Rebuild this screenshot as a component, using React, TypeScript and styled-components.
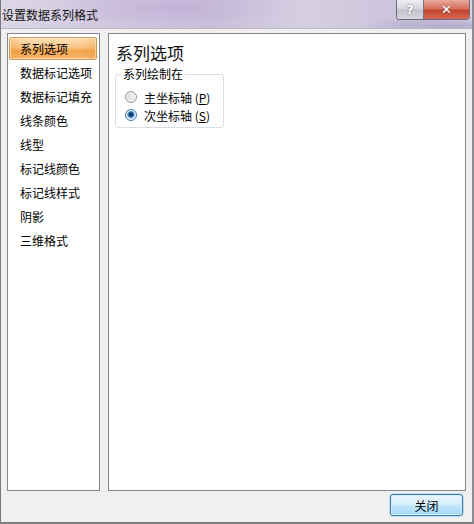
import React from 'react';
import styled, { createGlobalStyle } from 'styled-components';

const Global = createGlobalStyle`
  html, body { margin: 0; padding: 0; background: #f0f0f0; }
  body { font-family: "Noto Sans CJK SC", "Noto Sans", sans-serif; font-size: 12px; color: #000; }
`;

const Window = styled.div`
  width: 474px;
  height: 524px;
  display: flex;
  flex-direction: column;
  box-sizing: border-box;
  background: #f0f0f0;
  border-left: 1px solid #7a7a7a;
  border-right: 2px solid #8d8a96;
  border-bottom: 2px solid #7d7d7d;
  overflow: hidden;
`;

const TitleBar = styled.div`
  height: 28px;
  flex: none;
  display: flex;
  align-items: flex-start;
  justify-content: space-between;
  background:
    radial-gradient(ellipse 90px 10px at 450px 26px, rgba(150, 140, 190, 0.55), transparent),
    radial-gradient(ellipse 120px 16px at 170px 8px, rgba(190, 170, 215, 0.6), transparent),
    linear-gradient(90deg, #dcd7e6 0%, #cfc5de 25%, #c9bfd9 45%, #d6cfe2 65%, #cbc3da 85%, #d9d3e4 100%);
  border-bottom: 1px solid #b9b3c6;
`;

const Title = styled.div`
  padding: 7px 0 0 1px;
  font-size: 12px;
  line-height: 16px;
  color: #111;
`;

const Caption = styled.div`
  display: flex;
  margin-right: 2px;
  border: 1px solid #6d6878;
  border-top: none;
  border-radius: 0 0 4px 4px;
  overflow: hidden;
  height: 19px;
`;

const CapButton = styled.div<{ $close?: boolean }>`
  width: ${p => (p.$close ? 45 : 26)}px;
  display: flex;
  align-items: center;
  justify-content: center;
  font-family: "DejaVu Sans", sans-serif;
  font-weight: bold;
  font-size: ${p => (p.$close ? 13 : 12)}px;
  color: #fff;
  background: ${p =>
    p.$close
      ? 'linear-gradient(#e9a99c, #d8705e 45%, #c2432f 55%, #d66a52)'
      : 'linear-gradient(#eeeef2, #d6d6de 45%, #c3c3cc 55%, #d8d8e0)'};
  text-shadow: 0 0 2px #555;
  & + & { border-left: 1px solid #7a7482; }
`;

const Body = styled.div`
  flex: 1;
  display: flex;
  flex-direction: column;
  padding: 4px 6px 0 6px;
`;

const Panes = styled.div`
  display: flex;
  gap: 8px;
  height: 458px;
`;

const Nav = styled.ul`
  width: 93px;
  box-sizing: border-box;
  margin: 0;
  padding: 3px 2px 0 1px;
  list-style: none;
  background: #fff;
  border: 1px solid #828790;
`;

const NavItem = styled.li<{ $active?: boolean }>`
  height: 23px;
  margin-bottom: 1px;
  box-sizing: border-box;
  display: flex;
  align-items: center;
  line-height: 1;
  font-size: 12px;
  border: 1px solid ${p => (p.$active ? '#c69c5d' : 'transparent')};
  border-radius: 2px;
  background: ${p =>
    p.$active
      ? 'linear-gradient(90deg, rgba(230,140,40,0.25), transparent 20%, transparent 80%, rgba(230,140,40,0.25)), linear-gradient(#fde4b8, #f9c486 45%, #f5a850 60%, #f7b46a)'
      : 'transparent'};
  box-shadow: ${p => (p.$active ? 'inset 0 0 0 1px rgba(255,240,210,0.6)' : 'none')};
  padding-left: 10px;
`;

const Content = styled.div`
  flex: 1;
  box-sizing: border-box;
  background: #fff;
  border: 1px solid #828790;
  padding: 9px 0 0 6px;
`;

const Heading = styled.div`
  font-size: 17px;
  line-height: 20px;
  margin: 0 0 4px 1px;
  color: #111;
`;

const Group = styled.fieldset`
  width: 109px;
  box-sizing: border-box;
  margin: 0;
  padding: 9px 0 5px 9px;
  border: 1px solid #d5dfe5;
  border-radius: 3px;
  display: flex;
  flex-direction: column;
  gap: 4px;
`;

const Legend = styled.legend`
  padding: 0 2px;
  margin-left: -4px;
  font-size: 12px;
  line-height: 14px;
`;

const RadioRow = styled.label`
  display: flex;
  align-items: center;
  gap: 7px;
  height: 14px;
  font-size: 12px;
`;

const Dot = styled.span<{ $on?: boolean }>`
  width: 12px;
  height: 12px;
  box-sizing: border-box;
  border-radius: 50%;
  border: 1px solid ${p => (p.$on ? '#3c7fb1' : '#9a9a9a')};
  background: ${p =>
    p.$on
      ? 'radial-gradient(circle at 50% 45%, #0d3a62 0 1.6px, #2c73b0 2.4px, #7fb8e6 3.6px, #e4eef7 4.3px)'
      : 'linear-gradient(135deg, #d8d8d8, #f7f7f7)'};
  box-shadow: inset 0 0 0 1px #f2f2f2;
`;

const Key = styled.span`
  text-decoration: underline;
`;

const Footer = styled.div`
  display: flex;
  justify-content: flex-end;
  padding: 3px 3px 0 0;
`;

const CloseButton = styled.button`
  width: 73px;
  height: 22px;
  box-sizing: border-box;
  font-family: inherit;
  font-size: 12px;
  color: #000;
  border: 1px solid #3c7fb1;
  border-radius: 3px;
  background: linear-gradient(#eaf6fd, #d9f0fc 45%, #bee6fd 55%, #a7d9f5);
  box-shadow: inset 0 0 0 1px #d8eefb, 0 0 0 0.5px #8fc5e8;
  padding: 0;
`;

const navItems = ['系列选项', '数据标记选项', '数据标记填充', '线条颜色', '线型', '标记线颜色', '标记线样式', '阴影', '三维格式'];

export default function App() {
  return (
    <Window>
      <Global />
      <TitleBar>
        <Title>设置数据系列格式</Title>
        <Caption>
          <CapButton>?</CapButton>
          <CapButton $close>✕</CapButton>
        </Caption>
      </TitleBar>
      <Body>
        <Panes>
          <Nav>
            {navItems.map((t, i) => (
              <NavItem key={t} $active={i === 0}>{t}</NavItem>
            ))}
          </Nav>
          <Content>
            <Heading>系列选项</Heading>
            <Group>
              <Legend>系列绘制在</Legend>
              <RadioRow>
                <Dot />
                <span>主坐标轴 (<Key>P</Key>)</span>
              </RadioRow>
              <RadioRow>
                <Dot $on />
                <span>次坐标轴 (<Key>S</Key>)</span>
              </RadioRow>
            </Group>
          </Content>
        </Panes>
        <Footer>
          <CloseButton>关闭</CloseButton>
        </Footer>
      </Body>
    </Window>
  );
}
